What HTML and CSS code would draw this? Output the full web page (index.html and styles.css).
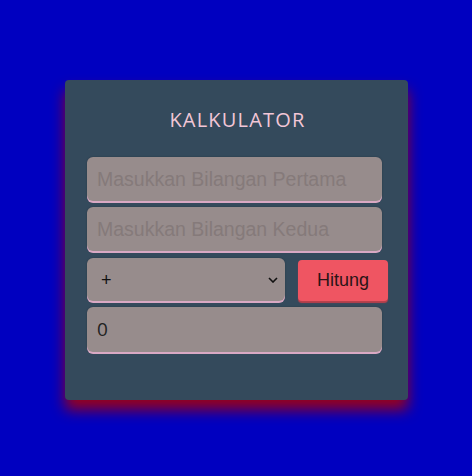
FILE: index.html
```html
<!DOCTYPE html>
<html>
<head>
<meta charset="utf-8">
<link rel="stylesheet" href="styles.css">
</head>
<body>
<div class="card">
  <h1 class="title">KALKULATOR</h1>
  <input class="field" type="text" placeholder="Masukkan Bilangan Pertama">
  <input class="field" type="text" placeholder="Masukkan Bilangan Kedua">
  <div class="row">
    <div class="select-wrap">
      <select class="op">
        <option>+</option>
        <option>-</option>
        <option>*</option>
        <option>/</option>
      </select>
      <svg class="chev" width="10" height="6" viewBox="0 0 10 6"><path d="M1 1 L5 5 L9 1" fill="none" stroke="#111" stroke-width="1.6"/></svg>
    </div>
    <button class="btn">Hitung</button>
  </div>
  <div class="field result">0</div>
</div>
</body>
</html>
```
FILE: styles.css
```css
html, body {
  margin: 0;
  padding: 0;
}
body {
  background: #0000c0;
  width: 472px;
  height: 476px;
  overflow: hidden;
  font-family: "Liberation Sans", Arial, sans-serif;
}
.card {
  box-sizing: border-box;
  width: 343px;
  height: 320px;
  margin: 80px 0 0 65px;
  background: #344a5c;
  border-radius: 4px;
  padding: 0 20px 0 22px;
  box-shadow: 0 10px 14px rgb(150, 0, 30);
  display: flex;
  flex-direction: column;
}
.title {
  margin: 25px 0 22px;
  height: 30px;
  line-height: 30px;
  text-align: center;
  font-family: "Open Sans", sans-serif;
  font-weight: 400;
  font-size: 20px;
  letter-spacing: 1.2px;
  color: #f2c6d6;
}
.field {
  box-sizing: border-box;
  display: block;
  width: 295px;
  height: 44px;
  margin: 0 0 6px;
  padding: 0 10px;
  border: none;
  border-radius: 6px;
  background: #978c8c;
  box-shadow: 0 2px 0 #d9a9c4, 0 0 2px rgba(0,0,0,0.25);
  font-family: "Liberation Sans", Arial, sans-serif;
  font-size: 19.5px;
  color: #222;
  outline: none;
}
.field::placeholder {
  color: #857a7a;
}
.row {
  display: flex;
  align-items: flex-start;
  gap: 13px;
  margin: 1px 0 6px;
  width: 301px;
}
.select-wrap {
  position: relative;
  width: 198px;
  height: 43px;
}
.op {
  -webkit-appearance: none;
  appearance: none;
  box-sizing: border-box;
  width: 100%;
  height: 43px;
  border: none;
  border-radius: 6px;
  background: #978c8c;
  box-shadow: 0 2px 0 #d9a9c4, 0 0 2px rgba(0,0,0,0.25);
  padding: 0 14px;
  font-family: "Liberation Sans", Arial, sans-serif;
  font-size: 18px;
  color: #111;
  outline: none;
}
.chev {
  position: absolute;
  right: 7px;
  top: 19px;
  pointer-events: none;
}
.btn {
  width: 90px;
  height: 41px;
  margin-top: 2px;
  border: none;
  border-radius: 4px;
  background: #ef5562;
  box-shadow: 0 2px 1px #b8404c;
  font-family: "Liberation Sans", Arial, sans-serif;
  font-size: 18px;
  color: #2a1416;
  padding: 0;
}
.result {
  line-height: 44px;
  height: 45px;
  font-family: "Open Sans", sans-serif;
  font-size: 19px;
  color: #222;
}
```
